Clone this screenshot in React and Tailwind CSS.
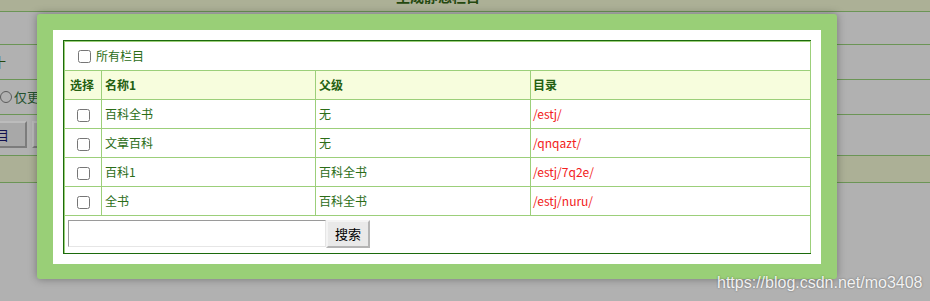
const rows = [
  { name: '百科全书', parent: '无', dir: '/estj/' },
  { name: '文章百科', parent: '无', dir: '/qnqazt/' },
  { name: '百科1', parent: '百科全书', dir: '/estj/7q2e/' },
  { name: '全书', parent: '百科全书', dir: '/estj/nuru/' },
];

function Box() {
  return (
    <input type="checkbox" className="m-0 w-[13px] h-[13px] align-middle" />
  );
}

export default function App() {
  return (
    <div className="relative w-[930px] h-[301px] overflow-hidden bg-[#b1b1b1] font-['Noto_Sans_CJK_SC',sans-serif] text-[12px]">
      {/* page behind the dialog */}
      <div className="h-[12px] bg-[#acb096] border-b border-[#6b9556] overflow-hidden">
        <div className="pl-[396px] -mt-[13px] text-[14px] font-bold text-[#24480f] leading-[18px]">生成静态栏目</div>
      </div>
      <div className="h-[33px] border-b border-[#6b9556]" />
      <div className="h-[35px] border-b border-[#6b9556] flex items-center overflow-hidden">
        <span className="-ml-[7px] text-[13px] text-[#24480f]">十</span>
      </div>
      <div className="h-[35px] border-b border-[#6b9556] flex items-center gap-[2px]">
        <span className="w-[12px] h-[12px] rounded-full border border-[#5c5c5c] bg-[#b1b1b1]" />
        <span className="text-[13px] text-[#25522f]">仅更</span>
      </div>
      <div className="h-[41px] border-b border-[#6b9556] flex items-start pt-[6px] gap-[5px]">
        <div className="-ml-[10px] w-[37px] h-[27px] bg-[#a8a8a8] border-2 border-t-[#bcbcbc] border-l-[#bcbcbc] border-b-[#7c7c7c] border-r-[#7c7c7c] flex items-center justify-end pr-[16px] text-[13px] text-[#101050]">
          目
        </div>
        <div className="w-[30px] h-[27px] bg-[#a8a8a8] border-2 border-t-[#bcbcbc] border-l-[#bcbcbc] border-b-[#7c7c7c] border-r-[#7c7c7c]" />
      </div>
      <div className="h-[27px] bg-[#acb096] border-b border-[#6b9556]" />

      {/* dialog */}
      <div className="absolute left-[37px] top-[14px] w-[800px] h-[265px] rounded-[3px] bg-[#99cf77] p-[16px] shadow-[0_0_8px_rgba(0,0,0,0.35)]">
        <div className="bg-white w-[768px] h-[234px] p-[10px]">
          <div className="border border-[#1c6a0c]">
            <table className="w-[746px] table-fixed border-collapse text-[#2b6d17]">
              <colgroup>
                <col className="w-[37px]" />
                <col className="w-[214px]" />
                <col className="w-[215px]" />
                <col className="w-[280px]" />
              </colgroup>
              <tbody>
                <tr className="h-[29px]">
                  <td colSpan={4} className="border border-[#9ccf7a] pl-[13px] p-0">
                    <label className="flex items-center">
                      <Box />
                      <span className="ml-[5px]">所有栏目</span>
                    </label>
                  </td>
                </tr>
                <tr className="h-[29px] bg-[#f7fddd] font-bold text-[#235f10]">
                  <td className="border border-[#9ccf7a] pl-[5px] p-0">选择</td>
                  <td className="border border-[#9ccf7a] pl-[3px] p-0">名称1</td>
                  <td className="border border-[#9ccf7a] pl-[3px] p-0">父级</td>
                  <td className="border border-[#9ccf7a] pl-[2px] p-0">目录</td>
                </tr>
                {rows.map((r) => (
                  <tr key={r.dir} className="h-[29px]">
                    <td className="border border-[#9ccf7a] p-0 text-center"><Box /></td>
                    <td className="border border-[#9ccf7a] pl-[3px] p-0">{r.name}</td>
                    <td className="border border-[#9ccf7a] pl-[3px] p-0">{r.parent}</td>
                    <td className="border border-[#9ccf7a] pl-[2px] p-0 text-[#f22020]">{r.dir}</td>
                  </tr>
                ))}
                <tr className="h-[37px]">
                  <td colSpan={4} className="border border-[#9ccf7a] border-b-0 p-0 pl-[3px] align-top pt-[4px]">
                    <div className="flex">
                      <input type="text" className="w-[258px] h-[27px] border border-t-[#9a9a9a] border-l-[#9a9a9a] border-b-[#e6e6e6] border-r-[#e6e6e6] bg-white outline-none" />
                      <button className="w-[44px] h-[28px] bg-[#e9e9e9] border-2 border-t-[#f4f4f4] border-l-[#f4f4f4] border-b-[#b4b4b4] border-r-[#b4b4b4] text-[13px] text-black">
                        搜索
                      </button>
                    </div>
                  </td>
                </tr>
              </tbody>
            </table>
          </div>
        </div>
      </div>

      {/* watermark */}
      <div className="absolute left-[717px] top-[271px] text-[16px] font-['Liberation_Sans',sans-serif] text-white/90 [text-shadow:0_0_2px_rgba(0,0,0,0.45)]">
        https://blog.csdn.net/mo3408
      </div>
    </div>
  );
}
